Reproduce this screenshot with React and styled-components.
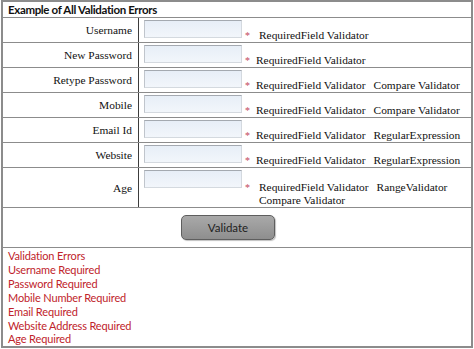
import React from "react";
import styled, { createGlobalStyle } from "styled-components";

const GlobalStyle = createGlobalStyle`
  body {
    margin: 0;
    background: #ffffff;
  }
`;

const Panel = styled.div`
  margin-left: 1px;
  width: 472px;
  box-sizing: border-box;
  border: 2px solid #8c8c8c;
  background: #ffffff;
`;

const Caption = styled.div`
  height: 15px;
  padding-left: 5px;
  border-bottom: 1px solid #8c8c8c;
  font-family: Lato, "Liberation Sans", sans-serif;
  font-weight: 700;
  font-size: 11.5px;
  letter-spacing: -0.35px;
  line-height: 15px;
  color: #111;
`;

const FieldRow = styled.div`
  display: grid;
  grid-template-columns: 136px 1fr;
  min-height: ${(p) => (p.$tall ? 38 : 24)}px;
  border-bottom: 1px solid #8c8c8c;
`;

const Label = styled.div`
  display: flex;
  align-items: center;
  justify-content: flex-end;
  padding-right: 6px;
  border-right: 1px solid #3c3c3c;
  font-family: "Liberation Serif", serif;
  font-size: 11.4px;
  color: #111;
`;

const FieldCell = styled.div`
  display: flex;
  align-items: flex-start;
  padding: 2px 0 0 5px;
  min-width: 0;
`;

const TextInput = styled.input`
  flex: none;
  width: 98px;
  height: 18px;
  box-sizing: border-box;
  margin: 0;
  border: 1px solid #d4d9df;
  border-top-color: #a4a9b0;
  border-left-color: #c0c5cc;
  background: linear-gradient(#e7eef7, #f2f6fb);
  outline: none;
`;

const Star = styled.span`
  flex: none;
  width: 11px;
  padding-left: 3px;
  margin-top: ${(p) => p.$offset}px;
  color: #c2485a;
  font-family: "Liberation Serif", serif;
  font-size: 10px;
  line-height: 13px;
`;

const Messages = styled.div`
  flex: 1;
  min-width: 0;
  margin-top: ${(p) => p.$offset}px;
  padding-left: ${(p) => (p.$lead ? 3 : 0)}px;
  font-family: "Liberation Serif", serif;
  font-size: 11.4px;
  line-height: 13px;
  color: #111;
`;

const Message = styled.span`
  display: inline-block;
  white-space: nowrap;
  margin-right: 8px;
`;

const ButtonRow = styled.div`
  height: 40px;
  padding: 7px 0 0 178px;
  box-sizing: border-box;
  border-bottom: 1px solid #8c8c8c;
`;

const ValidateButton = styled.button`
  width: 94px;
  height: 25px;
  border: 1px solid #5e5e5e;
  border-radius: 5px;
  background: linear-gradient(#a9a9a9, #8e8e8e);
  box-shadow: 1px 1px 1px rgba(0, 0, 0, 0.25);
  font-family: Lato, "Liberation Sans", sans-serif;
  font-size: 11.5px;
  color: #222;
  cursor: pointer;
`;

const ErrorList = styled.div`
  height: 98px;
  padding: 1px 0 0 5px;
  box-sizing: border-box;
  font-family: Lato, "Liberation Sans", sans-serif;
  font-size: 11px;
  letter-spacing: -0.15px;
  line-height: 13.9px;
  color: #c0232b;
`;

const fields = [
  { label: "Username", messages: ["RequiredField Validator"], lead: true },
  { label: "New Password", messages: ["RequiredField Validator"] },
  { label: "Retype Password", messages: ["RequiredField Validator", "Compare Validator"] },
  { label: "Mobile", messages: ["RequiredField Validator", "Compare Validator"] },
  { label: "Email Id", messages: ["RequiredField Validator", "RegularExpression"] },
  { label: "Website", messages: ["RequiredField Validator", "RegularExpression"] },
  {
    label: "Age",
    messages: ["RequiredField Validator", "RangeValidator", "Compare Validator"],
    lead: true,
    tall: true,
  },
];

const errors = [
  "Validation Errors",
  "Username Required",
  "Password Required",
  "Mobile Number Required",
  "Email Required",
  "Website Address Required",
  "Age Required",
];

const App = () => {
  return (
    <>
      <GlobalStyle />
      <Panel>
        <Caption>Example of All Validation Errors</Caption>
        {fields.map((field) => {
          const offset = field.tall ? 11 : 9;
          return (
            <FieldRow key={field.label} $tall={field.tall}>
              <Label>{field.label}</Label>
              <FieldCell>
                <TextInput type="text" aria-label={field.label} />
                <Star $offset={offset}>*</Star>
                <Messages $offset={offset} $lead={field.lead}>
                  {field.messages.map((msg) => (
                    <Message key={msg}>{msg}</Message>
                  ))}
                </Messages>
              </FieldCell>
            </FieldRow>
          );
        })}
        <ButtonRow>
          <ValidateButton type="button">Validate</ValidateButton>
        </ButtonRow>
        <ErrorList>
          {errors.map((err) => (
            <div key={err}>{err}</div>
          ))}
        </ErrorList>
      </Panel>
    </>
  );
};

export default App;
